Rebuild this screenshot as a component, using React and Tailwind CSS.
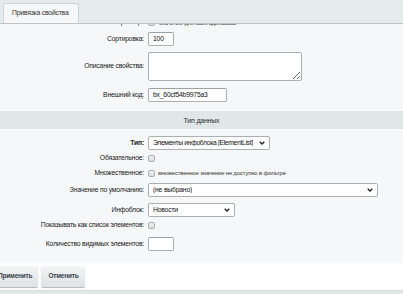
import React from "react";

const Chevron = () => (
  <svg width="6" height="4" viewBox="0 0 6 4" className="shrink-0">
    <polyline points="0.7,0.7 3,3 5.3,0.7" fill="none" stroke="#222" strokeWidth="1.4" />
  </svg>
);

const Label = ({ children, bold }) => (
  <div className={`w-[148px] shrink-0 pr-[4px] text-right whitespace-nowrap text-[#222] ${bold ? "font-bold" : ""}`}>
    {children}
  </div>
);

const Checkbox = () => (
  <span className="block shrink-0 w-[7px] h-[7px] rounded-[2px] border border-[#a7afb4] bg-gradient-to-b from-[#eef1f2] to-[#d9dee1]"></span>
);

const Select = ({ width, children }) => (
  <div
    className={`${width} h-[14px] flex items-center justify-between pl-[4px] pr-[4px] bg-white border border-[#a9b1b6] rounded-[2px] text-[#111]`}
  >
    <span className="whitespace-nowrap overflow-hidden">{children}</span>
    <Chevron />
  </div>
);

const Input = ({ width, value }) => (
  <div className={`${width} h-[14px] flex items-center px-[4px] bg-white border border-[#a9b1b6] border-t-[#9aa2a7] rounded-[2px] text-[#111]`}>
    {value}
  </div>
);

export default function App() {
  return (
    <div className="w-[403px] h-[294px] overflow-hidden bg-white font-['Liberation_Sans',Arial,sans-serif] text-[6.8px] tracking-[-0.2px] leading-none">
      {/* tab bar */}
      <div className="h-[24px] bg-[#e5eaec] border-b border-[#bcc4c8] flex items-end pl-[3px]">
        <div className="h-[20px] pl-[8px] pr-[9px] flex items-center bg-[#f5f7f8] border border-b-0 border-[#cdd4d8] rounded-t-[3px] text-[#333]">
          Привязка свойства
        </div>
      </div>

      {/* form */}
      <div className="bg-[#f5f7f8] pb-[12px]">
        {/* row scrolled away above, only its lowest pixels show */}
        <div className="h-[3px] overflow-hidden">
          <div className="flex items-center text-[#222] -translate-y-[5px]">
            <Label>Показывать на странице:</Label>
            <Checkbox />
            <span className="ml-[4px] text-[6px]">значение для всех одинаково</span>
          </div>
        </div>

        <div className="mt-[5px] flex items-center">
          <Label>Сортировка:</Label>
          <Input width="w-[26px]" value="100" />
        </div>

        <div className="mt-[6px] flex items-center">
          <Label>Описание свойства:</Label>
          <textarea className="w-[154px] h-[29px] bg-white border border-[#a9b1b6] rounded-[2px] outline-none"></textarea>
        </div>

        <div className="mt-[7px] flex items-center">
          <Label>Внешний код:</Label>
          <Input width="w-[79px]" value="bx_60cf54b9975a3" />
        </div>

        <div className="mt-[9px] h-[18px] bg-[#dfe7e9] flex items-center justify-center text-[#333] text-[7px]">
          Тип данных
        </div>

        <div className="mt-[7px] flex items-center">
          <Label bold>Тип:</Label>
          <Select width="w-[122px]">
            <span className="tracking-[-0.35px]">Элементы инфоблока [ElementList]</span>
          </Select>
        </div>

        <div className="mt-[5px] h-[7px] flex items-center">
          <Label>Обязательное:</Label>
          <Checkbox />
        </div>

        <div className="mt-[8px] h-[7px] flex items-center">
          <Label>Множественное:</Label>
          <Checkbox />
          <span className="ml-[3px] text-[5.8px] tracking-[-0.1px] text-[#333]">множественное значение не доступно в фильтре</span>
        </div>

        <div className="mt-[6px] flex items-center">
          <Label>Значение по умолчанию:</Label>
          <Select width="w-[230px]">(не выбрано)</Select>
        </div>

        <div className="mt-[6px] flex items-center">
          <Label>Инфоблок:</Label>
          <Select width="w-[87px]">Новости</Select>
        </div>

        <div className="mt-[5px] h-[7px] flex items-center">
          <Label>Показывать как список элементов:</Label>
          <Checkbox />
        </div>

        <div className="mt-[8px] flex items-center">
          <Label>Количество видимых элементов:</Label>
          <Input width="w-[26px]" value="" />
        </div>
      </div>

      {/* buttons */}
      <div className="h-[27px] flex items-center gap-[3px] -ml-[8px]">
        <button className="h-[21px] pl-[6px] pr-[6px] rounded-[2px] bg-gradient-to-b from-[#f3f5f6] to-[#dde2e4] shadow-[0_1px_1px_rgba(0,0,0,0.3)] font-bold text-[6.5px] text-[#3a454c]">
          Применить
        </button>
        <button className="h-[21px] pl-[7px] pr-[6px] rounded-[2px] bg-gradient-to-b from-[#f3f5f6] to-[#dde2e4] shadow-[0_1px_1px_rgba(0,0,0,0.3)] font-bold text-[6.5px] text-[#3a454c]">
          Отменить
        </button>
      </div>
      <div className="h-[6px] bg-[#e3e7e9] border-t border-[#d5dadd]"></div>
    </div>
  );
}
